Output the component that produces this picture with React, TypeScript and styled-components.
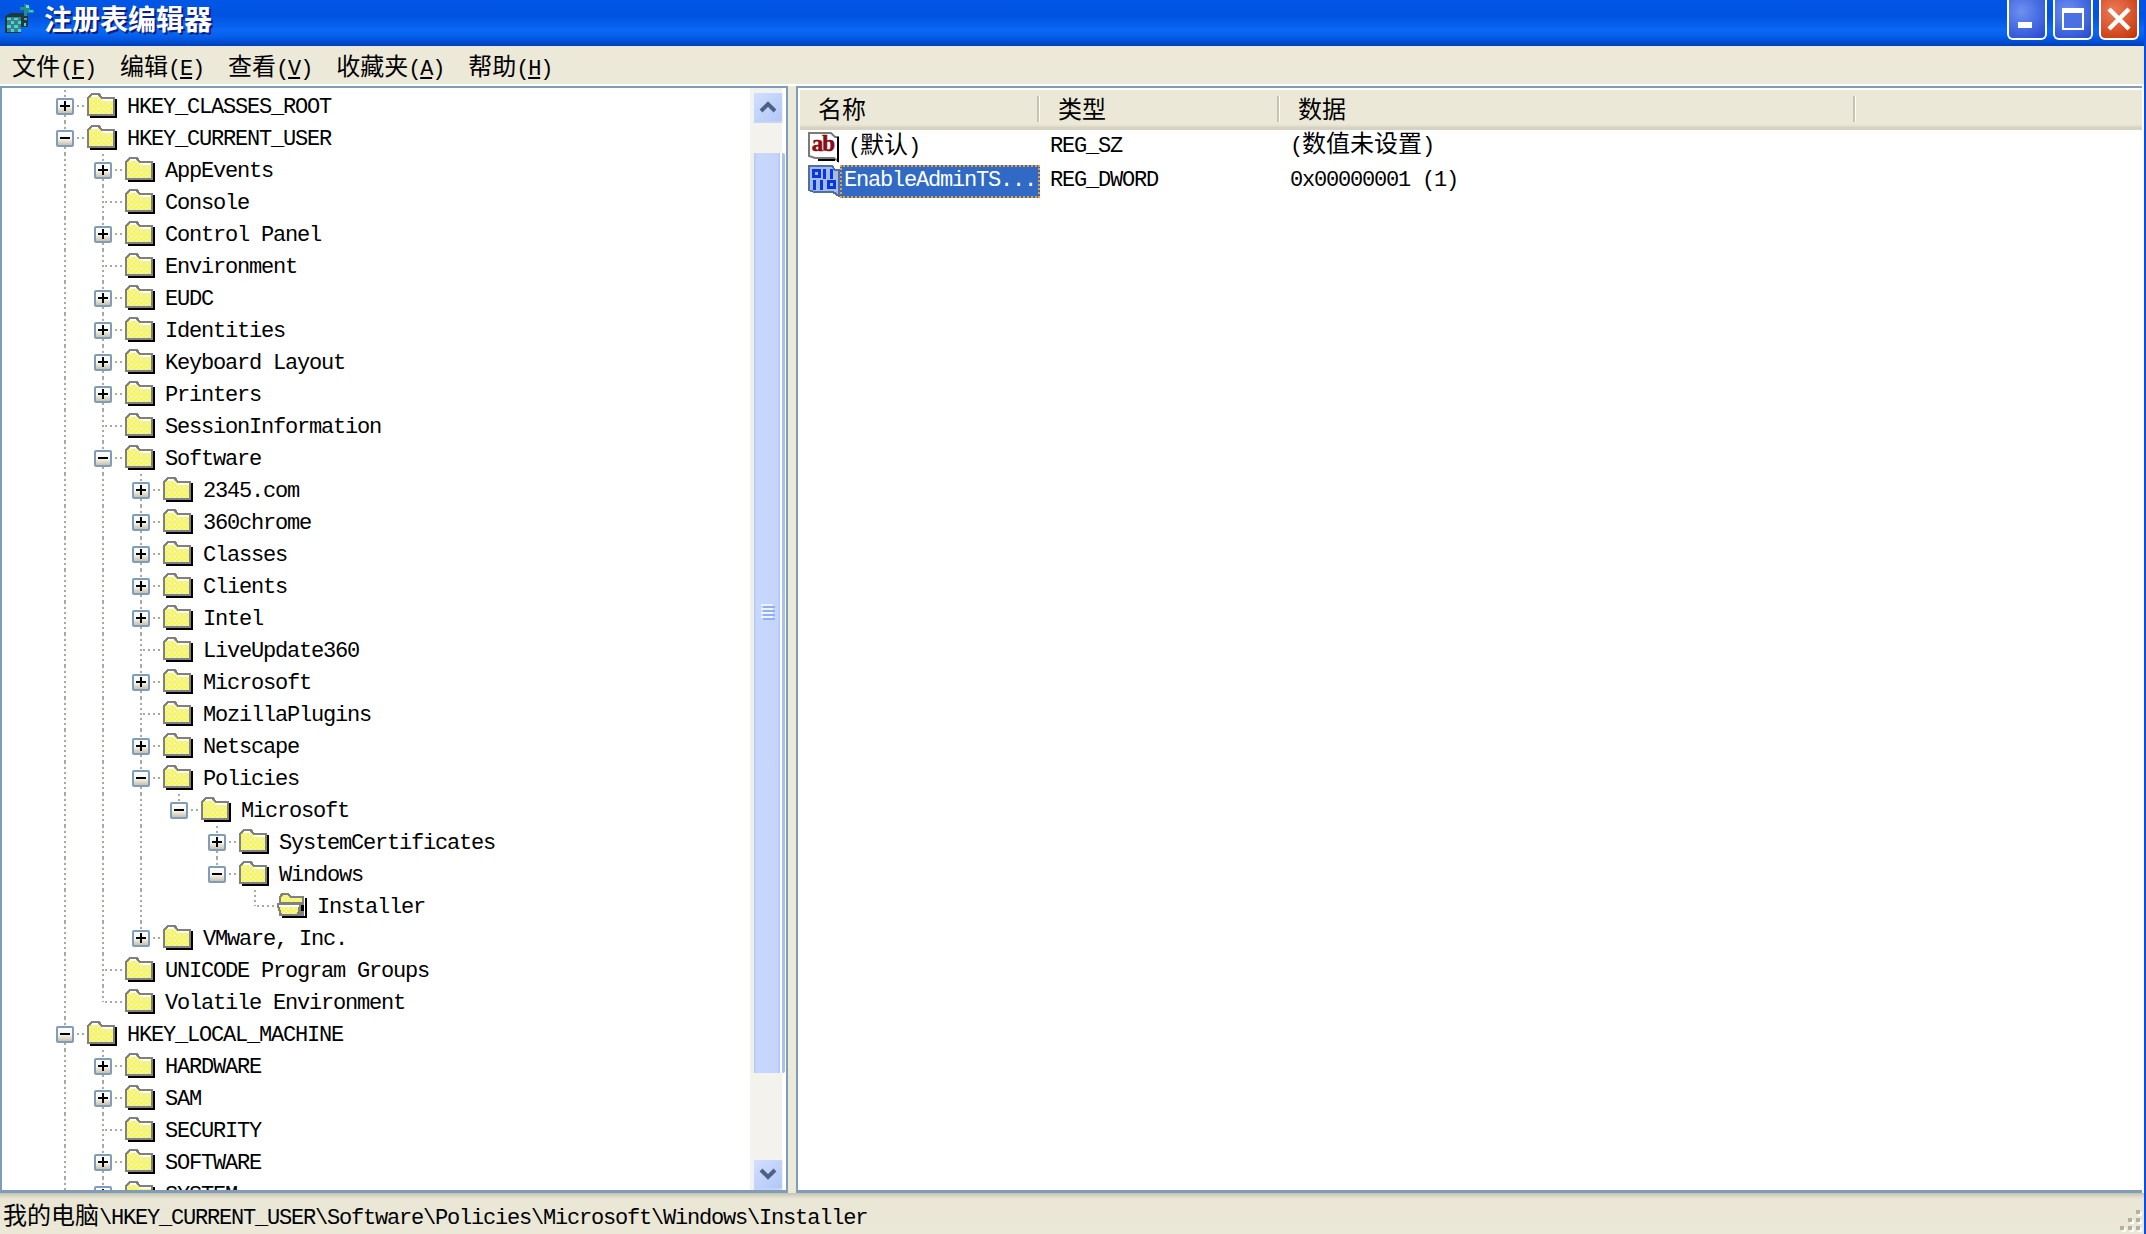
import React from "react";
import styled, { createGlobalStyle } from "styled-components";

const GlobalStyle = createGlobalStyle`
  html, body {
    margin: 0;
    padding: 0;
    height: 100%;
    overflow: hidden;
    background: #ece9d8;
  }
  * {
    box-sizing: border-box;
  }
`;

const DOT = "#a9a99f";

const Window = styled.div`
  display: flex;
  flex-direction: column;
  width: 2146px;
  height: 1234px;
  overflow: hidden;
  background: #ece9d8;
  border-right: 2px solid #0a4ee8;
  color: #000;
  font-family: "Liberation Mono", "Noto Sans CJK SC", monospace;
  font-size: 22px;
  letter-spacing: -1.2px;
`;

const Han = styled.span`
  font-family: "Noto Sans CJK SC", sans-serif;
  font-size: 24px;
  line-height: 1;
  letter-spacing: 0;
`;

const TitleBar = styled.div`
  display: flex;
  flex: none;
  justify-content: space-between;
  height: 46px;
  margin-right: -2px;
  padding-right: 7px;
  background: linear-gradient(
    to bottom,
    #0056e6 0,
    #0053e0 16px,
    #0a69f4 30px,
    #0660ea 36px,
    #0050d8 41px,
    #003fb8 46px
  );
`;

const TitleLeft = styled.div`
  display: flex;
  align-items: flex-start;
  gap: 9px;
  padding: 2px 0 0 4px;
`;

const TitleText = styled.span`
  font-family: "Noto Sans CJK SC", sans-serif;
  font-size: 28px;
  font-weight: 700;
  line-height: 32px;
  letter-spacing: 0;
  color: #fff;
  text-shadow: 2px 2px 0 #0f1f80;
`;

const WindowButtons = styled.div`
  display: flex;
  gap: 6px;
`;

const WindowButton = styled.div<{ $danger?: boolean }>`
  display: flex;
  align-items: center;
  justify-content: center;
  width: 40px;
  height: 40px;
  border: 2px solid #fff;
  border-top: 0;
  border-radius: 0 0 6px 6px;
  background: ${(p) =>
    p.$danger
      ? "radial-gradient(circle at 35% 30%, #ea7a58 0, #dc5a34 45%, #c03200 100%)"
      : "radial-gradient(circle at 35% 30%, #6f90f0 0, #4a70e4 45%, #2348cf 100%)"};
`;

const MenuBar = styled.div`
  display: flex;
  flex: none;
  height: 40px;
  border-bottom: 2px solid #fff;
`;

const MenuItem = styled.span`
  padding: 7px 12px 0;
  line-height: 30px;
  white-space: pre;
`;

const Panes = styled.div`
  display: flex;
  flex: 1;
  min-height: 0;
`;

const TreePane = styled.div`
  display: flex;
  flex: none;
  width: 788px;
  padding-top: 2px;
  background: #fff;
  border: 2px solid #7f9db9;
  border-bottom-width: 3px;
`;

const Tree = styled.div`
  flex: 1;
  min-width: 0;
  overflow: hidden;
  padding-left: 44px;
`;

const Row = styled.div`
  display: flex;
  align-items: center;
  height: 32px;
`;

const hLine = `repeating-linear-gradient(to right, ${DOT} 0 2px, transparent 2px 5px) right center / 17px 2px no-repeat`;

const Indent = styled.div<{ $line?: boolean }>`
  flex: none;
  width: 38px;
  height: 32px;
  background: ${(p) =>
    p.$line
      ? `repeating-linear-gradient(to bottom, ${DOT} 0 2px, transparent 2px 5px) center top / 2px 100% no-repeat`
      : "none"};
`;

const Branch = styled.div<{ $last?: boolean }>`
  display: flex;
  flex: none;
  align-items: center;
  justify-content: center;
  width: 38px;
  height: 32px;
  background: ${hLine},
    repeating-linear-gradient(to bottom, ${DOT} 0 2px, transparent 2px 5px)
      center top / 2px ${(p) => (p.$last ? "50%" : "100%")} no-repeat;
`;

const Expander = styled.div<{ $open?: boolean }>`
  width: 18px;
  height: 17px;
  border: 2px solid #7f9db9;
  border-radius: 2px;
  background: ${(p) =>
      p.$open ? "" : "linear-gradient(#000, #000) center / 2px 10px no-repeat,"}
    linear-gradient(#000, #000) center / 10px 2px no-repeat,
    linear-gradient(to bottom, #fff 0, #f4f2ea 55%, #c6c2ac 100%);
`;

const NodeLabel = styled.span`
  margin-left: 10px;
  padding-top: 3px;
  line-height: 29px;
  white-space: pre;
`;

const FolderWrap = styled.svg`
  flex: none;
  margin: -2px 0 0 3px;
  shape-rendering: crispEdges;
`;

const ScrollBar = styled.div`
  display: flex;
  flex: none;
  flex-direction: column;
  width: 36px;
  margin-top: -2px;
  padding: 4px 4px 0 0;
  background: linear-gradient(to right, #f4f2ec 0 32px, #fff 32px);
`;

const ScrollButton = styled.div`
  display: flex;
  flex: none;
  align-items: center;
  justify-content: center;
  width: 30px;
  height: 31px;
  margin-left: 3px;
  border: 1px solid #eef3ff;
  border-bottom: 2px solid #c6d4f4;
  border-radius: 2px;
  background: linear-gradient(135deg, #d2dffc, #b2c7f8);
`;

const ScrollTrack = styled.div`
  flex: 1;
  min-height: 0;
`;

const ScrollThumb = styled.div`
  display: flex;
  flex-direction: column;
  align-items: center;
  justify-content: center;
  gap: 2px;
  width: 34px;
  height: 920px;
  margin: 30px 0 0 1px;
  padding-bottom: 4px;
  border-left: 3px solid #eef0ea;
  border-right: 3px solid #aac2ea;
  background: linear-gradient(
    to right,
    #b4c8f6 0,
    #c8d7fc 10%,
    #c4d4fb 85%,
    #aec6f8 92%,
    #fff 92%
  );
  border-radius: 2px;
`;

const GripBar = styled.div`
  width: 12px;
  height: 2px;
  margin-left: -2px;
  background: #eef3ff;
  box-shadow: 2px 2px 0 #8eaef6;
`;

const Splitter = styled.div`
  flex: none;
  width: 8px;
`;

const ListPane = styled.div`
  display: flex;
  flex: 1;
  flex-direction: column;
  min-width: 0;
  padding: 2px 0 0 2px;
  background: #fff;
  border: 2px solid #7f9db9;
  border-right: 0;
  border-bottom-width: 3px;
  margin-right: 2px;
  box-shadow: 2px 0 0 #fff;
`;

const ListHeader = styled.div`
  display: flex;
  flex: none;
  height: 40px;
  background: #ebe8d8;
  border-bottom: 3px solid #d6d2c2;
  box-shadow: inset 0 -2px 0 #e2decd;
`;

const HeaderCell = styled.div<{ $width: number }>`
  flex: none;
  width: ${(p) => p.$width}px;
  padding: 6px 0 0 18px;
  line-height: 30px;
  background: linear-gradient(to right, #c7c5b2 0 2px, #fff 2px 3px) right 6px /
    3px 26px no-repeat;
`;

const ListRow = styled.div`
  display: flex;
  flex: none;
  align-items: center;
  height: 34px;
`;

const NameCell = styled.div`
  display: flex;
  flex: none;
  align-items: center;
  width: 240px;
  padding-left: 8px;
`;

const NameText = styled.span<{ $selected?: boolean }>`
  flex: none;
  width: 200px;
  height: 33px;
  padding-left: ${(p) => (p.$selected ? 4 : 8)}px;
  line-height: 32px;
  white-space: pre;
  color: ${(p) => (p.$selected ? "#fff" : "#000")};
  background: ${(p) => (p.$selected ? "#316ac5" : "transparent")};
  outline: ${(p) => (p.$selected ? "2px dotted #f0a030" : "none")};
  outline-offset: -2px;
`;

const DataCell = styled.div<{ $width?: number }>`
  flex: none;
  width: ${(p) => (p.$width ? `${p.$width}px` : "auto")};
  padding-left: 10px;
  line-height: 34px;
  white-space: pre;
`;

const StatusBar = styled.div`
  display: flex;
  flex: none;
  align-items: flex-end;
  justify-content: space-between;
  height: 41px;
  padding: 0 2px 2px 3px;
  background: linear-gradient(
    to bottom,
    #c4c0ac 0,
    #dad7c6 3px,
    #e9e6d6 6px,
    #ebe8d8 100%
  );
`;

const StatusText = styled.span`
  margin-bottom: -2px;
  line-height: 30px;
  white-space: pre;
`;

type TreeNode = {
  name: string;
  kids?: TreeNode[];
  plus?: boolean;
  selected?: boolean;
  more?: boolean; // siblings follow below the visible part of the tree
};

const leaf = (name: string): TreeNode => ({ name });
const closed = (name: string): TreeNode => ({ name, plus: true });

const treeData: TreeNode[] = [
  closed("HKEY_CLASSES_ROOT"),
  {
    name: "HKEY_CURRENT_USER",
    kids: [
      closed("AppEvents"),
      leaf("Console"),
      closed("Control Panel"),
      leaf("Environment"),
      closed("EUDC"),
      closed("Identities"),
      closed("Keyboard Layout"),
      closed("Printers"),
      leaf("SessionInformation"),
      {
        name: "Software",
        kids: [
          closed("2345.com"),
          closed("360chrome"),
          closed("Classes"),
          closed("Clients"),
          closed("Intel"),
          leaf("LiveUpdate360"),
          closed("Microsoft"),
          leaf("MozillaPlugins"),
          closed("Netscape"),
          {
            name: "Policies",
            kids: [
              {
                name: "Microsoft",
                kids: [
                  closed("SystemCertificates"),
                  {
                    name: "Windows",
                    kids: [{ name: "Installer", selected: true }],
                  },
                ],
              },
            ],
          },
          closed("VMware, Inc."),
        ],
      },
      leaf("UNICODE Program Groups"),
      leaf("Volatile Environment"),
    ],
  },
  {
    name: "HKEY_LOCAL_MACHINE",
    more: true,
    kids: [
      closed("HARDWARE"),
      closed("SAM"),
      leaf("SECURITY"),
      closed("SOFTWARE"),
      closed("SYSTEM"),
    ],
  },
];

// Latin runs stay in the mono stack, Han runs get their own size so they are twice as wide
function Mixed({ text }: { text: string }) {
  const parts = text.split(/([\u4e00-\u9fff]+)/);
  return (
    <>
      {parts.map((part, i) =>
        /[\u4e00-\u9fff]/.test(part) ? <Han key={i}>{part}</Han> : part
      )}
    </>
  );
}

function Dither({ id }: { id: string }) {
  return (
    <defs>
      <pattern id={id} width="5" height="5" patternUnits="userSpaceOnUse">
        <rect width="5" height="5" fill="#ffff10" />
        <rect width="2.5" height="2.5" fill="#ecece4" />
        <rect x="2.5" y="2.5" width="2.5" height="2.5" fill="#ecece4" />
      </pattern>
    </defs>
  );
}

function FolderIcon() {
  return (
    <FolderWrap width="30" height="26" viewBox="0 0 30 26">
      <Dither id="dither" />
      <rect x="3" y="24" width="27" height="2" fill="#000" />
      <rect x="28" y="7" width="2" height="19" fill="#000" />
      <path d="M0 6 L3 2 L4 1 H12 L14 3 L15 5 H28 V24 H0 Z" fill="#808080" />
      <path d="M2 6 L5 3 H11 L14 7 H26 V22 H2 Z" fill="url(#dither)" />
      <rect x="5" y="3" width="6" height="2" fill="#fff" />
      <rect x="14" y="7" width="12" height="2" fill="#fff" />
    </FolderWrap>
  );
}

function OpenFolderIcon() {
  return (
    <FolderWrap width="30" height="26" viewBox="0 0 30 26">
      <Dither id="ditherOpen" />
      <rect x="5" y="24" width="25" height="2" fill="#000" />
      <rect x="28" y="6" width="2" height="20" fill="#000" />
      <path d="M2 5 L4 1 H11 L14 4 H27 V24 H2 Z" fill="#808080" />
      <path d="M4 5 L6 3 H10 L13 6 H25 V10 H4 Z" fill="url(#ditherOpen)" />
      <path d="M0 11 H24 V13 L22 24 H3 L0 14 Z" fill="#808080" />
      <path d="M2 13 H22 L20 22 H5 Z" fill="url(#ditherOpen)" />
      <rect x="2" y="13" width="20" height="2" fill="#fff" />
      <rect x="24" y="13" width="3" height="6" fill="#000" />
    </FolderWrap>
  );
}

function TreeRows({ nodes, guides }: { nodes: TreeNode[]; guides: boolean[] }) {
  return (
    <>
      {nodes.map((node, i) => {
        const last = i === nodes.length - 1 && !node.more;
        const hasBox = node.plus || node.kids;
        return (
          <React.Fragment key={node.name + i}>
            <Row>
              {guides.map((on, g) => (
                <Indent key={g} $line={on} />
              ))}
              <Branch $last={last}>
                {hasBox && <Expander $open={!!node.kids} />}
              </Branch>
              {node.selected ? <OpenFolderIcon /> : <FolderIcon />}
              <NodeLabel>{node.name}</NodeLabel>
            </Row>
            {node.kids && <TreeRows nodes={node.kids} guides={[...guides, !last]} />}
          </React.Fragment>
        );
      })}
    </>
  );
}

function RegistryIcon() {
  return (
    <svg
      width="31"
      height="32"
      viewBox="3 0 27 33"
      preserveAspectRatio="none"
      shapeRendering="crispEdges"
      style={{ flex: "none" }}
    >
      <path d="M20 2 h3 v3 h3 v3 h3 v3 h-6 v3 h-3 v-6 h-3 v-3 h3 z" fill="#2a8a8c" />
      <rect x="22" y="3" width="3" height="3" fill="#5fe0e0" />
      <rect x="25" y="8" width="3" height="2" fill="#30d0d8" />
      <path d="M5 14 L9 11 H20 V14 H24 V26 H18 V32 H4 V14 Z" fill="#1c3a3c" />
      <rect x="6" y="15" width="12" height="16" fill="#4a7a80" />
      <g fill="#2ee0e0">
        <rect x="6" y="16" width="3" height="3" />
        <rect x="12" y="16" width="3" height="3" />
        <rect x="9" y="20" width="3" height="3" />
        <rect x="15" y="20" width="3" height="3" />
        <rect x="6" y="24" width="3" height="3" />
        <rect x="12" y="24" width="3" height="3" />
        <rect x="9" y="28" width="3" height="3" />
        <rect x="15" y="28" width="3" height="3" />
      </g>
      <rect x="20" y="16" width="3" height="3" fill="#6a9a9c" />
      <rect x="20" y="22" width="2" height="3" fill="#2ee0e0" />
    </svg>
  );
}

function AbIcon() {
  return (
    <svg width="32" height="32" viewBox="0 0 32 32" style={{ flex: "none" }}>
      <path d="M1 2 H23 L27 6 H30 V30 L26 27 H7 L1 25 Z" fill="#fff" stroke="#7a7a7a" strokeWidth="2" />
      <path d="M30 6 V31" stroke="#000" strokeWidth="2" />
      <path d="M10 29 H27" stroke="#000" strokeWidth="2" />
      <text
        x="15"
        y="20"
        textAnchor="middle"
        fontFamily="Liberation Serif, serif"
        fontWeight="700"
        fontSize="23"
        letterSpacing="-1"
        stroke="#8a0c14"
        strokeWidth="0.6"
        fill="#8a0c14"
      >
        ab
      </text>
    </svg>
  );
}

function BinaryIcon() {
  return (
    <svg width="32" height="32" viewBox="0 0 32 32" shapeRendering="crispEdges" style={{ flex: "none" }}>
      <path d="M1 1 H24 L27 5 H31 V31 L25 27 H6 L1 25 Z" fill="#a3bbe8" stroke="#4e6ea4" strokeWidth="2" />
      <g fill="none" stroke="#0a36e0" strokeWidth="3">
        <rect x="5.5" y="5.5" width="6" height="6" />
        <rect x="20.5" y="16.5" width="6" height="6" />
      </g>
      <g fill="#0a36e0">
        <rect x="15" y="4" width="3" height="10" />
        <rect x="22" y="4" width="3" height="10" />
        <rect x="5" y="15" width="3" height="10" />
        <rect x="12" y="15" width="3" height="10" />
      </g>
    </svg>
  );
}

function Chevron({ down }: { down?: boolean }) {
  return (
    <svg width="18" height="12" viewBox="0 0 18 12">
      <path
        d={down ? "M2 2 L9 9 L16 2" : "M2 10 L9 3 L16 10"}
        fill="none"
        stroke="#4d6185"
        strokeWidth="4"
      />
    </svg>
  );
}

function SizeGrip() {
  const cells = [
    [16, 0],
    [8, 8],
    [16, 8],
    [0, 16],
    [8, 16],
    [16, 16],
  ];
  return (
    <svg width="22" height="22" viewBox="0 0 22 22" style={{ flex: "none" }} shapeRendering="crispEdges">
      {cells.map(([x, y]) => (
        <g key={`${x}-${y}`}>
          <rect x={x + 2} y={y + 2} width="4" height="4" fill="#fff" />
          <rect x={x} y={y} width="4" height="4" fill="#b4b09c" />
        </g>
      ))}
    </svg>
  );
}

const menus = [
  ["文件", "F"],
  ["编辑", "E"],
  ["查看", "V"],
  ["收藏夹", "A"],
  ["帮助", "H"],
];

export default function App() {
  return (
    <Window>
      <GlobalStyle />
      <TitleBar>
        <TitleLeft>
          <RegistryIcon />
          <TitleText>注册表编辑器</TitleText>
        </TitleLeft>
        <WindowButtons>
          <WindowButton>
            <svg width="22" height="22" viewBox="0 0 22 22">
              <rect x="2" y="14" width="14" height="6" fill="#fff" />
            </svg>
          </WindowButton>
          <WindowButton>
            <svg width="22" height="22" viewBox="0 0 22 22">
              <rect x="0" y="0" width="22" height="22" fill="#fff" />
              <rect x="2" y="5" width="18" height="15" fill="#4a70e4" />
            </svg>
          </WindowButton>
          <WindowButton $danger>
            <svg width="24" height="24" viewBox="0 0 24 24">
              <path d="M2 2 L22 22 M22 2 L2 22" stroke="#fff" strokeWidth="4.5" />
            </svg>
          </WindowButton>
        </WindowButtons>
      </TitleBar>

      <MenuBar>
        {menus.map(([label, key]) => (
          <MenuItem key={key}>
            <Han>{label}</Han>(<u>{key}</u>)
          </MenuItem>
        ))}
      </MenuBar>

      <Panes>
        <TreePane>
          <Tree>
            <TreeRows nodes={treeData} guides={[]} />
          </Tree>
          <ScrollBar>
            <ScrollButton>
              <Chevron />
            </ScrollButton>
            <ScrollTrack>
              <ScrollThumb>
                <GripBar />
                <GripBar />
                <GripBar />
                <GripBar />
              </ScrollThumb>
            </ScrollTrack>
            <ScrollButton>
              <Chevron down />
            </ScrollButton>
          </ScrollBar>
        </TreePane>
        <Splitter />
        <ListPane>
          <ListHeader>
            <HeaderCell $width={240}>
              <Han>名称</Han>
            </HeaderCell>
            <HeaderCell $width={240}>
              <Han>类型</Han>
            </HeaderCell>
            <HeaderCell $width={576}>
              <Han>数据</Han>
            </HeaderCell>
          </ListHeader>
          <ListRow>
            <NameCell>
              <AbIcon />
              <NameText>
                <Mixed text="(默认)" />
              </NameText>
            </NameCell>
            <DataCell $width={240}>REG_SZ</DataCell>
            <DataCell>
              <Mixed text="(数值未设置)" />
            </DataCell>
          </ListRow>
          <ListRow>
            <NameCell>
              <BinaryIcon />
              <NameText $selected>EnableAdminTS...</NameText>
            </NameCell>
            <DataCell $width={240}>REG_DWORD</DataCell>
            <DataCell>0x00000001 (1)</DataCell>
          </ListRow>
        </ListPane>
      </Panes>

      <StatusBar>
        <StatusText>
          <Mixed text="我的电脑\HKEY_CURRENT_USER\Software\Policies\Microsoft\Windows\Installer" />
        </StatusText>
        <SizeGrip />
      </StatusBar>
    </Window>
  );
}
